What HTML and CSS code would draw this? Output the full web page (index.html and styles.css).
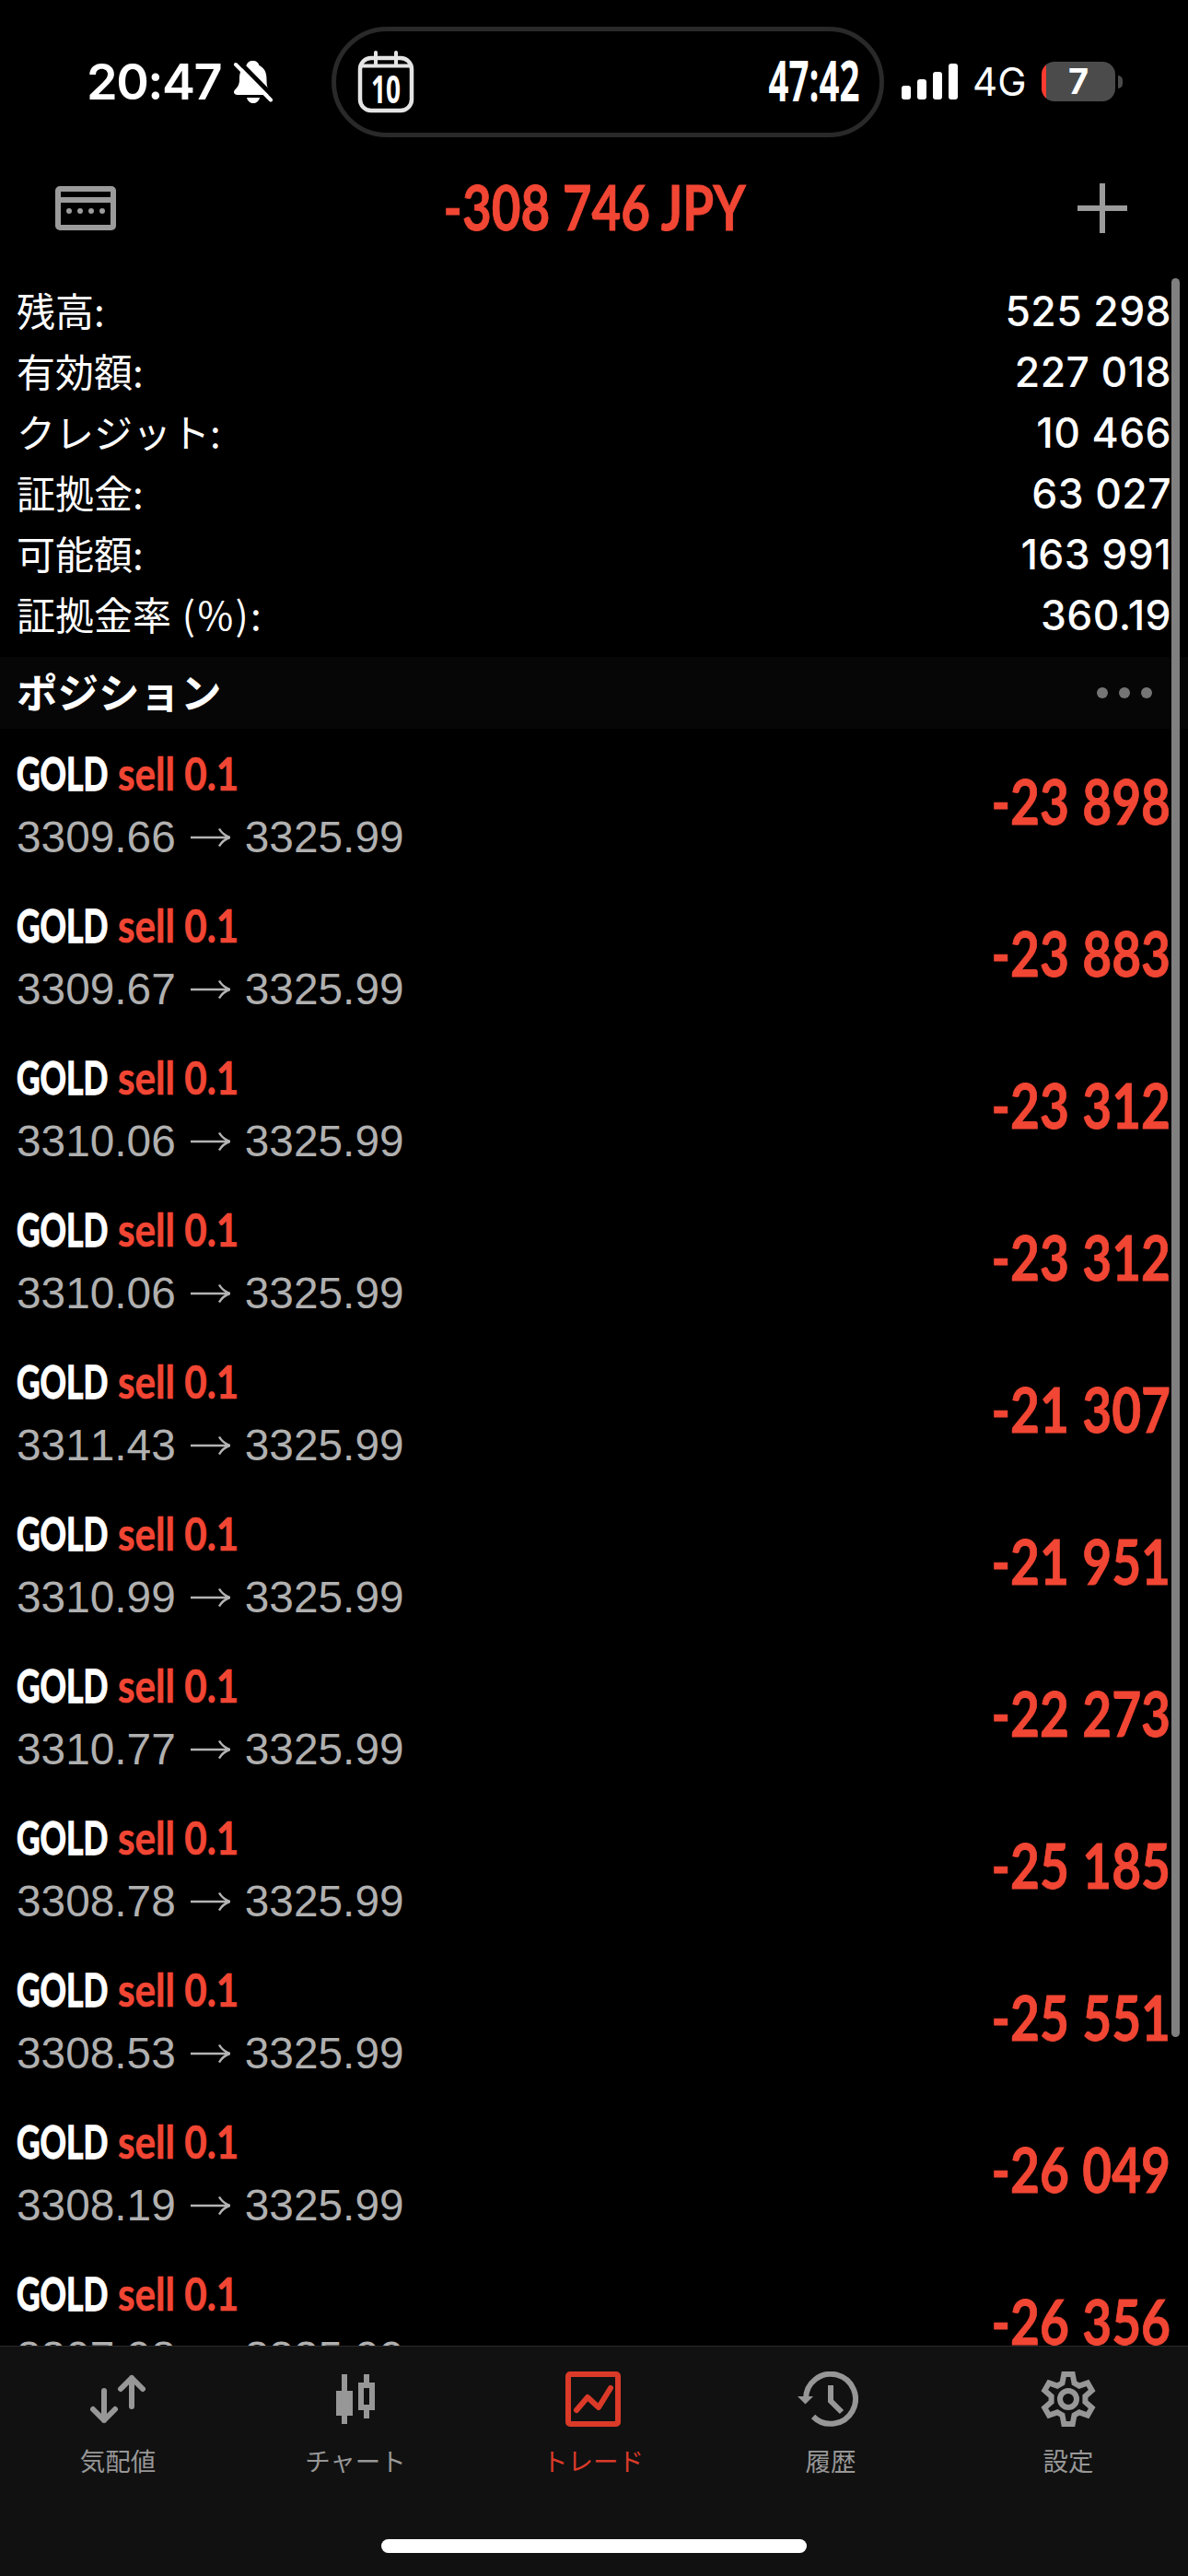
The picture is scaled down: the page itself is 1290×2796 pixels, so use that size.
FILE: index.html
```
<html lang="ja">
	<head>
		<meta charset="utf-8">
		<title>トレード</title>
		<link rel="stylesheet" href="styles.css">
		<script type="text/javascript" src="positions.js"></script>
	</head>
	<body onLoad="showPositions()">
		<div id="page">
			<div id="statusbar">
				<span class="clock">20:47</span>
				<svg class="bell" width="44" height="48" viewBox="0 0 44 48">
					<path d="M21.500 1c4 0 6 2 7 5 6 3 8 8 8 15 0 8 1 10 4 13 2 3 0 4-3 4H5c-4 0-5-3-3-5.500 3-3 5-5 5-12 0-7 2-12 7.500-14.500 1-3 3-5 7-5z" fill="#fff"/>
					<path d="M15 41h14c-1 4-4 6-7 6s-6-2-7-6z" fill="#fff"/>
					<path d="M5 0.500l40 40.500" stroke="#000" stroke-width="5"/>
					<path d="M3 5l38 38.500" stroke="#fff" stroke-width="4" stroke-linecap="round"/>
				</svg>
				<div id="island">
					<svg width="62" height="68" viewBox="0 0 62 68" fill="none" stroke="#e4e4e4">
						<rect x="3" y="8" width="56" height="57" rx="12" stroke-width="4.500"/>
						<path d="M4 16.500h54M20 2v14M42 2v14" stroke-width="4" stroke-linecap="round"/>
						<text class="calday" x="31" y="57" textLength="32" lengthAdjust="spacingAndGlyphs" text-anchor="middle">10</text>
					</svg>
					<span class="narrow timer">47:42</span>
				</div>
				<svg class="signal" width="61" height="40" viewBox="0 0 61 40" fill="#fff">
					<rect x="0" y="24" width="10" height="15" rx="3"/>
					<rect x="17" y="17" width="10" height="22" rx="3"/>
					<rect x="34" y="9" width="10" height="30" rx="3"/>
					<rect x="51" y="0" width="10" height="39" rx="3"/>
				</svg>
				<span class="network">4G</span>
				<div class="battery">7</div>
				<div class="nub"></div>
			</div>
			<div id="navbar">
				<svg width="66" height="48" viewBox="0 0 66 48">
					<rect x="3" y="3" width="60" height="42" rx="2" fill="none" stroke="#9b9b9b" stroke-width="6"/>
					<path d="M3 15h60" stroke="#9b9b9b" stroke-width="6"/>
					<g fill="#9b9b9b"><circle cx="15" cy="27" r="3"/><circle cx="27" cy="27" r="3"/><circle cx="39" cy="27" r="3"/><circle cx="51" cy="27" r="3"/></g>
				</svg>
				<h1><span class="narrow total">-308 746 JPY</span></h1>
				<svg width="54" height="54" viewBox="0 0 54 54"><path d="M27 0v54M0 27h54" stroke="#9b9b9b" stroke-width="6"/></svg>
			</div>
			<div id="account">
				<p><label>残高:</label><span>525 298</span></p>
				<p><label>有効額:</label><span>227 018</span></p>
				<p><label>クレジット:</label><span>10 466</span></p>
				<p><label>証拠金:</label><span>63 027</span></p>
				<p><label>可能額:</label><span>163 991</span></p>
				<p><label>証拠金率<span class="percent"> (%):</span></label><span>360.19</span></p>
			</div>
			<div id="section">
				<h2>ポジション</h2>
				<svg width="60" height="12" viewBox="0 0 60 12" fill="#757575"><circle cx="6" cy="6" r="6"/><circle cx="30" cy="6" r="6"/><circle cx="54" cy="6" r="6"/></svg>
			</div>
			<div id="positions"></div>
			<div id="tabs">
				<a class="tab">
					<svg width="60" height="60" viewBox="0 0 60 60" fill="none" stroke="#979797" stroke-width="6" stroke-linecap="round" stroke-linejoin="round">
						<path d="M15 21v32M3 41l12 12 12-12M45 38V7M33 19L45 7l12 12"/>
					</svg>
					気配値
				</a>
				<a class="tab">
					<svg width="60" height="60" viewBox="0 0 60 60">
						<path d="M15 3h6v18h6v27h-6v9h-6v-9H9V21h6z" fill="#979797"/>
						<path d="M42 3v12M42 42v9M36 15h12v24H36z" fill="none" stroke="#979797" stroke-width="6"/>
					</svg>
					チャート
				</a>
				<a class="tab active">
					<svg width="60" height="60" viewBox="0 0 60 60" fill="none" stroke="#db3a29" stroke-width="6" stroke-linejoin="round" stroke-linecap="round">
						<rect x="3" y="3" width="54" height="54" rx="2"/>
						<path d="M12 42l12-14 12 11 13-21"/>
					</svg>
					トレード
				</a>
				<a class="tab">
					<svg class="history" width="66" height="60" viewBox="0 0 66 60" fill="none" stroke="#979797" stroke-width="6">
						<path d="M9 30A27 27 0 1 1 17 49"/>
						<path d="M36 15v17l12 12"/>
						<path d="M0 27h17l-8.500 8.500z" fill="#979797" stroke="none"/>
					</svg>
					履歴
				</a>
				<a class="tab">
					<svg width="60" height="60" viewBox="0 0 60 60" fill="none" stroke="#979797" stroke-width="6">
						<path d="M34.700 3L36.500 12.500 41.900 15.600 51 12.400 55.700 20.600 48.400 26.900V33.100L55.700 39.400 51 47.600 41.900 44.400 36.500 47.500 34.700 57H25.300L23.500 47.500 18.100 44.400 9 47.600 4.300 39.400 11.600 33.100V26.900L4.300 20.600 9 12.400 18.100 15.600 23.500 12.500 25.300 3z"/>
						<circle cx="30" cy="30" r="9"/>
					</svg>
					設定
				</a>
				<div id="homebar"></div>
			</div>
			<div id="scrollbar"></div>
		</div>
	</body>
</html>
```

FILE: positions.js
```
var positions = [
	["3309.66", "-23 898"],
	["3309.67", "-23 883"],
	["3310.06", "-23 312"],
	["3310.06", "-23 312"],
	["3311.43", "-21 307"],
	["3310.99", "-21 951"],
	["3310.77", "-22 273"],
	["3308.78", "-25 185"],
	["3308.53", "-25 551"],
	["3308.19", "-26 049"],
	["3307.98", "-26 356"]
];

function showPositions() {
	var html = '';
	for (var i = 0; i < positions.length; i++) {
		html += '<div class="position"><div>'
			+ '<div class="order"><b class="narrow symbol">GOLD</b><span class="narrow side">sell 0.1</span></div>'
			+ '<div class="price"><span>' + positions[i][0] + '</span>'
			+ '<svg width="43" height="22" viewBox="0 0 43 22" fill="none" stroke="#b4b4b4" stroke-width="2.500"><path d="M0 11h42M31 1.500q4 7 12 9.500-8 2.500-12 9.500"/></svg>'
			+ '<span>3325.99</span></div>'
			+ '</div><span class="narrow profit">' + positions[i][1] + '</span></div>';
	}
	document.getElementById('positions').innerHTML = html;
}
```

FILE: styles.css
```
body {
	padding: 0;
	margin: 0;
	background-color: #000;
	color: #fff;
	font-family: Inter, "Noto Sans CJK JP", sans-serif;
	}

#page {
	position: relative;
	display: flex;
	flex-direction: column;
	width: 1290px;
	height: 2796px;
	overflow: hidden;
	}

svg {
	display: block;
	flex: none;
	}

/* squeezed lettering, width is set by each class */
.narrow {
	display: inline-block;
	font-family: Lato, sans-serif;
	font-weight: 700;
	white-space: nowrap;
	}

#statusbar {
	display: flex;
	align-items: center;
	box-sizing: border-box;
	height: 177px;
	padding-left: 94px;
	flex: none;
	}

.clock {
	width: 159px;
	font-size: 54px;
	font-weight: 600;
	letter-spacing: -1.5px;
	white-space: nowrap;
	}

.bell {
	width: 44px;
	}

#island {
	display: flex;
	align-items: center;
	justify-content: space-between;
	box-sizing: border-box;
	width: 600px;
	height: 120px;
	margin-left: 63px;
	padding: 0 22px 0 23px;
	border: 5px solid #292929;
	border-radius: 60px;
	}

.calday {
	font: 700 41px "Open Sans", sans-serif;
	fill: #fff;
	stroke: none;
	}

.timer {
	font-family: "Open Sans", sans-serif;
	font-size: 60px;
	line-height: 80px;
	padding-bottom: 3px;
	transform: scaleX(.64);
	transform-origin: right;
	}

.signal {
	margin-left: 19px;
	}

.network {
	width: 75px;
	margin-left: 16px;
	font-size: 42px;
	}

.battery {
	width: 80px;
	height: 43px;
	border-radius: 14px;
	background: linear-gradient(to right, #ff3b30 5px, #4b4b4b 5px);
	font-size: 38px;
	font-weight: 700;
	line-height: 43px;
	text-align: center;
	}

.nub {
	width: 5px;
	height: 14px;
	margin-left: 3px;
	border-radius: 0 5px 5px 0;
	background-color: #4b4b4b;
	}

#navbar {
	display: flex;
	align-items: center;
	justify-content: space-between;
	height: 98px;
	padding: 0 66px 0 60px;
	flex: none;
	}

h1 {
	display: flex;
	justify-content: center;
	width: 334px;
	margin: 0 4px 0 0;
	}

.total {
	padding-bottom: 3px;
	color: #f24634;
	font-size: 66px;
	line-height: 80px;
	transform: scaleX(.83);
	-webkit-text-stroke: .8px #f24634;
	}

#account {
	padding: 30px 18px 12px;
	flex: none;
	}

#account p {
	display: flex;
	justify-content: space-between;
	margin: 0;
	height: 66px;
	line-height: 66px;
	font-size: 44.5px;
	font-weight: 500;
	letter-spacing: .4px;
	}

#account label {
	font: 400 42px/62px "Noto Sans CJK JP", sans-serif;
	letter-spacing: 0;
	}

.percent {
	letter-spacing: 2.4px;
	}

#section {
	display: flex;
	align-items: center;
	justify-content: space-between;
	height: 78px;
	padding: 0 39px 0 18px;
	background-color: #060606;
	flex: none;
	}

h2 {
	margin: 0;
	padding-bottom: 5px;
	font: bold 44.5px "Noto Sans CJK JP", sans-serif;
	}

#positions {
	height: 1755px;
	overflow: hidden;
	flex: none;
	}

.position {
	display: flex;
	justify-content: space-between;
	box-sizing: border-box;
	height: 165px;
	padding: 18px 19px 0 18px;
	}

.order {
	display: flex;
	height: 62px;
	font-size: 49px;
	line-height: 60px;
	}

.symbol {
	width: 110px;
	transform: scaleX(.72);
	transform-origin: left;
	-webkit-text-stroke: 1.4px #fff;
	}

.side {
	color: #f24634;
	transform: scaleX(.86);
	transform-origin: left;
	-webkit-text-stroke: .6px #f24634;
	}

.price {
	display: flex;
	align-items: center;
	gap: 16px;
	height: 68px;
	padding-top: 4px;
	color: #b0b0b0;
	font: 47.800px/68px "Liberation Sans", sans-serif;
	font-kerning: none;
	}

.profit {
	color: #f24634;
	font-size: 66px;
	line-height: 122px;
	word-spacing: 1px;
	transform: scaleX(.835);
	transform-origin: right;
	-webkit-text-stroke: .8px #f24634;
	}

#tabs {
	display: grid;
	grid-template-columns: repeat(5, 258px);
	grid-template-rows: 209px 15px;
	height: 249px;
	border-top: 1px solid #2b2b2b;
	background-color: #111;
	flex: none;
	}

.tab {
	display: flex;
	flex-direction: column;
	align-items: center;
	padding: 27px 2px 0 0;
	color: #979797;
	font: 27.500px/40px "Noto Sans CJK JP", sans-serif;
	}

.tab svg {
	margin-bottom: 16px;
	}

.tab .history {
	margin-right: 6px;
	}

.active {
	color: #db3a29;
	}

#homebar {
	grid-column: 1 / 6;
	width: 462px;
	height: 15px;
	margin: 0 auto;
	border-radius: 8px;
	background-color: #fff;
	}

/* lies over the list */
#scrollbar {
	position: absolute;
	top: 302px;
	right: 9px;
	width: 9px;
	height: 1909px;
	border-radius: 5px;
	background-color: #808080;
	}
```
